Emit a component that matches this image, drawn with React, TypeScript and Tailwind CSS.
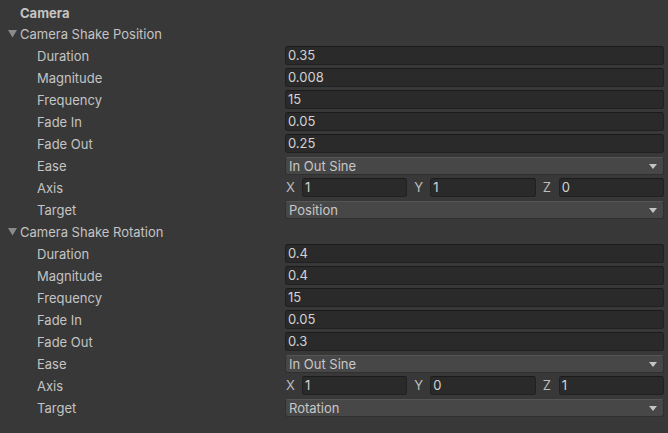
import React from "react";

const font = { fontFamily: "Inter, 'Noto Sans', sans-serif" };

function Tri() {
  return (
    <svg width="9" height="8" viewBox="0 0 9 8" className="absolute left-[8px] top-[7px]">
      <path d="M0 0 H9 L4.5 7.5 Z" fill="#8a8a8a" />
    </svg>
  );
}

function Header({ title }: { title: string }) {
  return (
    <div className="relative h-[22px] leading-[22px] pl-[20px] text-[#c4c4c4]">
      <Tri />
      {title}
    </div>
  );
}

function Field({ value }: { value: string }) {
  return (
    <div className="h-[19px] mt-[1px] mb-[2px] flex-1 rounded-[3px] bg-[#2a2a2a] border border-[#212121] border-t-[#1b1b1b] pl-[2px] leading-[17px] text-[#d2d2d2]">
      {value}
    </div>
  );
}

function Row({ label, children }: { label: string; children: React.ReactNode }) {
  return (
    <div className="h-[22px] flex items-center">
      <div className="w-[285px] pl-[37px] text-[#c4c4c4] leading-[22px] shrink-0">{label}</div>
      <div className="flex-1 flex items-center pr-[4px]">{children}</div>
    </div>
  );
}

function Dropdown({ value }: { value: string }) {
  return (
    <div className="h-[18px] flex-1 rounded-[3px] bg-[#474747] border border-[#303030] border-t-[#555555] pl-[3px] pr-[6px] flex items-center justify-between text-[#c8c8c8]">
      <span className="leading-[16px]">{value}</span>
      <svg width="8" height="5" viewBox="0 0 8 5">
        <path d="M0 0 H8 L4 5 Z" fill="#c4c4c4" />
      </svg>
    </div>
  );
}

function Axis({ x, y, z }: { x: string; y: string; z: string }) {
  const items: [string, string][] = [["X", x], ["Y", y], ["Z", z]];
  return (
    <div className="flex-1 flex gap-[6px]">
      {items.map(([l, v]) => (
        <div key={l} className="flex-1 flex items-center">
          <div className="w-[17px] pl-[1px] text-[#bdbdbd]">{l}</div>
          <div className="flex-1 flex">
            <Field value={v} />
          </div>
        </div>
      ))}
    </div>
  );
}

function Section({
  title,
  vals,
  axis,
  target,
}: {
  title: string;
  vals: string[];
  axis: [string, string, string];
  target: string;
}) {
  return (
    <>
      <Header title={title} />
      <Row label="Duration"><Field value={vals[0]} /></Row>
      <Row label="Magnitude"><Field value={vals[1]} /></Row>
      <Row label="Frequency"><Field value={vals[2]} /></Row>
      <Row label="Fade In"><Field value={vals[3]} /></Row>
      <Row label="Fade Out"><Field value={vals[4]} /></Row>
      <Row label="Ease"><Dropdown value="In Out Sine" /></Row>
      <Row label="Axis"><Axis x={axis[0]} y={axis[1]} z={axis[2]} /></Row>
      <Row label="Target"><Dropdown value={target} /></Row>
    </>
  );
}

export default function App() {
  return (
    <div className="w-[668px] h-[433px] bg-[#383838] text-[13px] pt-[4px] overflow-hidden" style={font}>
      <div className="h-[19px] leading-[19px] pl-[20px] font-bold text-[#c4c4c4]">Camera</div>
      <Section
        title="Camera Shake Position"
        vals={["0.35", "0.008", "15", "0.05", "0.25"]}
        axis={["1", "1", "0"]}
        target="Position"
      />
      <Section
        title="Camera Shake Rotation"
        vals={["0.4", "0.4", "15", "0.05", "0.3"]}
        axis={["1", "0", "1"]}
        target="Rotation"
      />
    </div>
  );
}
